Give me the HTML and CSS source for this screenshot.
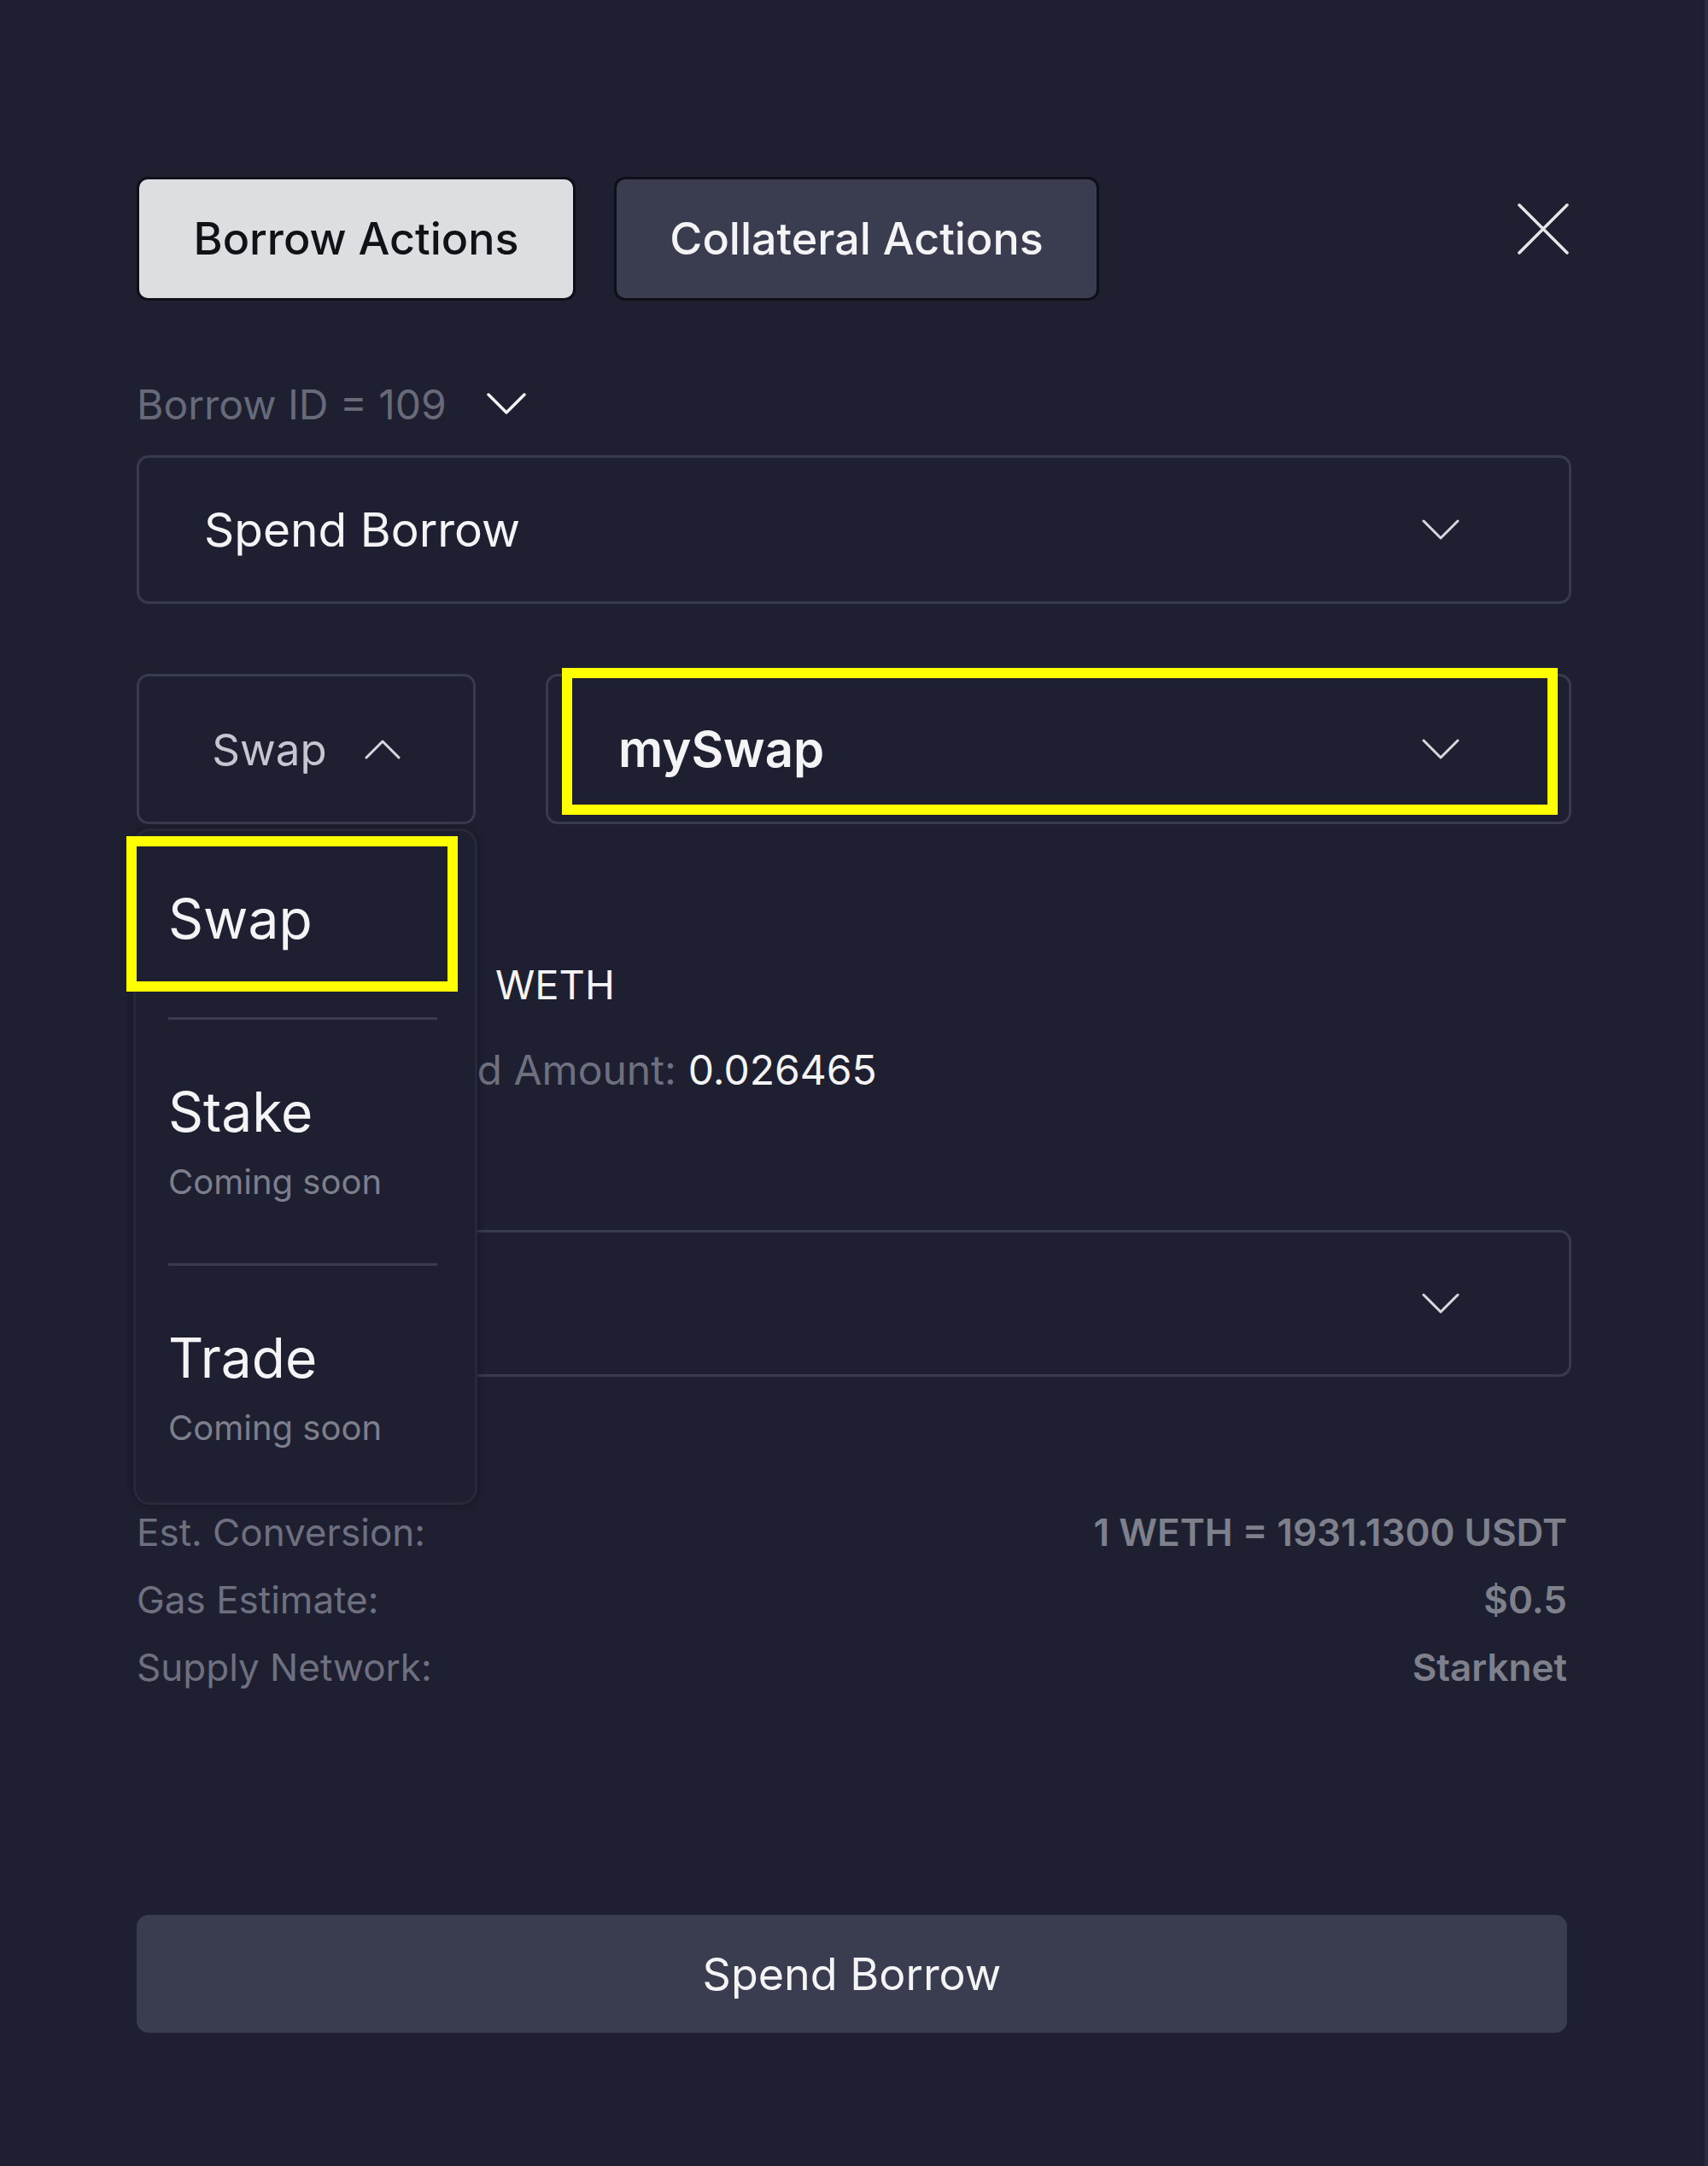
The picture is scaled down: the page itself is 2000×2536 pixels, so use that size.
FILE: index.html
```html
<!DOCTYPE html>
<html lang="en">
<head>
<meta charset="utf-8">
<title>Borrow Actions</title>
<link rel="stylesheet" href="styles.css">
</head>
<body>
<div class="modal">
  <div class="tabs">
    <button class="tab tab-active">Borrow Actions</button>
    <button class="tab tab-idle">Collateral Actions</button>
    <svg class="close" width="60" height="60" viewBox="0 0 60 60"><path d="M2 2 L58 58 M58 2 L2 58" stroke="#e6e6ea" stroke-width="3.5" stroke-linecap="round" fill="none"/></svg>
  </div>

  <div class="borrow-id">
    <span>Borrow ID = 109</span>
    <svg width="46" height="26" viewBox="0 0 46 26"><polyline points="2,2 23,23 44,2" stroke="#f2f2f4" stroke-width="3.5" fill="none" stroke-linecap="round" stroke-linejoin="round"/></svg>
  </div>

  <div class="select select-main">
    <span class="select-text">Spend Borrow</span>
    <svg class="chev" width="44" height="24" viewBox="0 0 44 24"><polyline points="2,2 22,22 42,2" stroke="#d8d9de" stroke-width="3" fill="none" stroke-linecap="round" stroke-linejoin="round"/></svg>
  </div>

  <div class="select-row">
    <div class="select select-action">
      <span class="action-text">Swap</span>
      <svg width="42" height="24" viewBox="0 0 42 24"><polyline points="2,22 21,3 40,22" stroke="#d8d9de" stroke-width="3" fill="none" stroke-linecap="round" stroke-linejoin="round"/></svg>
    </div>
    <div class="select select-dex">
      <span class="dex-text">mySwap</span>
      <svg class="chev" width="44" height="24" viewBox="0 0 44 24"><polyline points="2,2 22,22 42,2" stroke="#d8d9de" stroke-width="3" fill="none" stroke-linecap="round" stroke-linejoin="round"/></svg>
    </div>
  </div>

  <div class="info-row weth-row">
    <span class="token-icon"></span>
    <span class="bright">WETH</span>
  </div>
  <div class="info-row amount-row">
    <span class="muted">Borrowed Amount:</span>
    <span class="bright">0.026465</span>
  </div>

  <div class="select select-token">
    <span class="select-text"></span>
    <svg class="chev" width="44" height="24" viewBox="0 0 44 24"><polyline points="2,2 22,22 42,2" stroke="#d8d9de" stroke-width="3" fill="none" stroke-linecap="round" stroke-linejoin="round"/></svg>
  </div>

  <div class="details">
    <div class="detail"><span class="d-label">Est. Conversion:</span><span class="d-value">1 WETH = 1931.1300 USDT</span></div>
    <div class="detail"><span class="d-label">Gas Estimate:</span><span class="d-value">$0.5</span></div>
    <div class="detail"><span class="d-label">Supply Network:</span><span class="d-value">Starknet</span></div>
  </div>

  <button class="submit">Spend Borrow</button>

  <div class="menu">
    <div class="menu-item menu-first">
      <div class="mi-title">Swap</div>
    </div>
    <div class="menu-item">
      <div class="mi-title">Stake</div>
      <div class="mi-sub">Coming soon</div>
    </div>
    <div class="menu-item menu-last">
      <div class="mi-title">Trade</div>
      <div class="mi-sub">Coming soon</div>
    </div>
  </div>

  <div class="highlight hl-dex"></div>
  <div class="highlight hl-swap"></div>
</div>
</body>
</html>
```
FILE: styles.css
```css
html, body {
  margin: 0;
  padding: 0;
  background: #1e2031;
}

body {
  font-family: Inter, "Noto Sans", "Liberation Sans", sans-serif;
  color: #f2f2f4;
}

.modal {
  position: relative;
  box-sizing: border-box;
  width: 2000px;
  height: 2536px;
  padding: 207px 160px 0 160px;
  background: #1e2031;
  box-shadow: inset -4px 0 0 #2a2d40;
  overflow: hidden;
}

/* Tabs */
.tabs {
  display: flex;
  align-items: flex-start;
  gap: 45px;
  height: 145px;
}

.tab {
  box-sizing: border-box;
  height: 145px;
  border: 3px solid #0e0f17;
  border-radius: 13px;
  font-family: inherit;
  font-size: 52px;
  font-weight: 500;
  padding: 0;
  cursor: pointer;
}

.tab-active {
  width: 514px;
  background: #dcdee2;
  color: #111218;
}

.tab-idle {
  width: 568px;
  background: #3a3c4f;
  color: #f4f4f6;
}

.close {
  margin-left: auto;
  margin-top: 31px;
  margin-right: 3px;
}

/* Borrow id */
.borrow-id {
  display: flex;
  align-items: center;
  gap: 47px;
  height: 60px;
  margin-top: 91px;
  font-size: 48px;
  color: #676a79;
}

/* Selects */
.select {
  box-sizing: border-box;
  display: flex;
  align-items: center;
  justify-content: space-between;
  border: 3px solid #383b4f;
  border-radius: 14px;
}

.select-main {
  height: 174px;
  margin-top: 30px;
  padding: 0 128px 0 76px;
}

.select-text {
  font-size: 55px;
  color: #f4f4f6;
}

.select-row {
  display: flex;
  gap: 82px;
  margin-top: 82px;
}

.select-action {
  width: 397px;
  height: 176px;
  justify-content: center;
  gap: 44px;
}

.action-text {
  font-size: 51px;
  color: #c4c6d0;
}

.select-dex {
  flex: 1;
  height: 176px;
  padding: 0 128px 0 82px;
}

.dex-text {
  font-size: 58px;
  font-weight: 600;
  color: #f4f4f6;
}

/* Info rows */
.info-row {
  display: flex;
  align-items: center;
  height: 60px;
  font-size: 47px;
}

.weth-row {
  margin-top: 157px;
}

.token-icon {
  width: 420px;
  flex-shrink: 0;
}

.amount-row {
  margin-top: 40px;
  padding-left: 208px;
  gap: 14px;
  font-size: 48px;
}

.muted {
  color: #6e7080;
}

.bright {
  color: #f4f4f6;
}

.select-token {
  height: 172px;
  margin-top: 158px;
  padding: 0 128px 0 76px;
}

/* Details */
.details {
  display: flex;
  flex-direction: column;
  gap: 19px;
  margin-top: 152px;
  padding-right: 5px;
}

.detail {
  display: flex;
  justify-content: space-between;
  align-items: center;
  height: 60px;
  font-size: 44px;
}

.d-label {
  color: #6e7080;
}

.d-value {
  color: #7e808c;
  font-weight: 600;
}

/* Submit */
.submit {
  display: block;
  width: calc(100% - 5px);
  height: 138px;
  margin-top: 260px;
  border: none;
  border-radius: 14px;
  background: #3a3c4f;
  color: #f4f4f6;
  font-family: inherit;
  font-size: 52px;
  cursor: pointer;
}

/* Dropdown menu */
.menu {
  position: absolute;
  left: 156px;
  top: 970px;
  width: 403px;
  box-sizing: border-box;
  padding: 0 44px 0 38px;
  background: #1e2031;
  border: 3px solid #262939;
  border-radius: 20px;
  box-shadow: 0 0 10px rgba(10, 11, 20, 0.45);
}

.menu-item {
  border-top: 3px solid #393c50;
  padding: 70px 0 70px 0;
}

.menu-first {
  border-top: none;
  padding: 65px 0 77px 0;
}

.menu-last {
  padding-bottom: 62px;
}

.mi-title {
  height: 76px;
  line-height: 76px;
  font-size: 64px;
  color: #f4f4f6;
}

.mi-sub {
  height: 50px;
  line-height: 50px;
  margin-top: 19px;
  font-size: 40px;
  color: #7d7f8c;
}

/* Annotation highlights */
.highlight {
  position: absolute;
  box-sizing: border-box;
  border: 12px solid #ffff00;
  pointer-events: none;
}

.hl-dex {
  left: 658px;
  top: 782px;
  width: 1166px;
  height: 172px;
}

.hl-swap {
  left: 148px;
  top: 979px;
  width: 388px;
  height: 182px;
}
```
